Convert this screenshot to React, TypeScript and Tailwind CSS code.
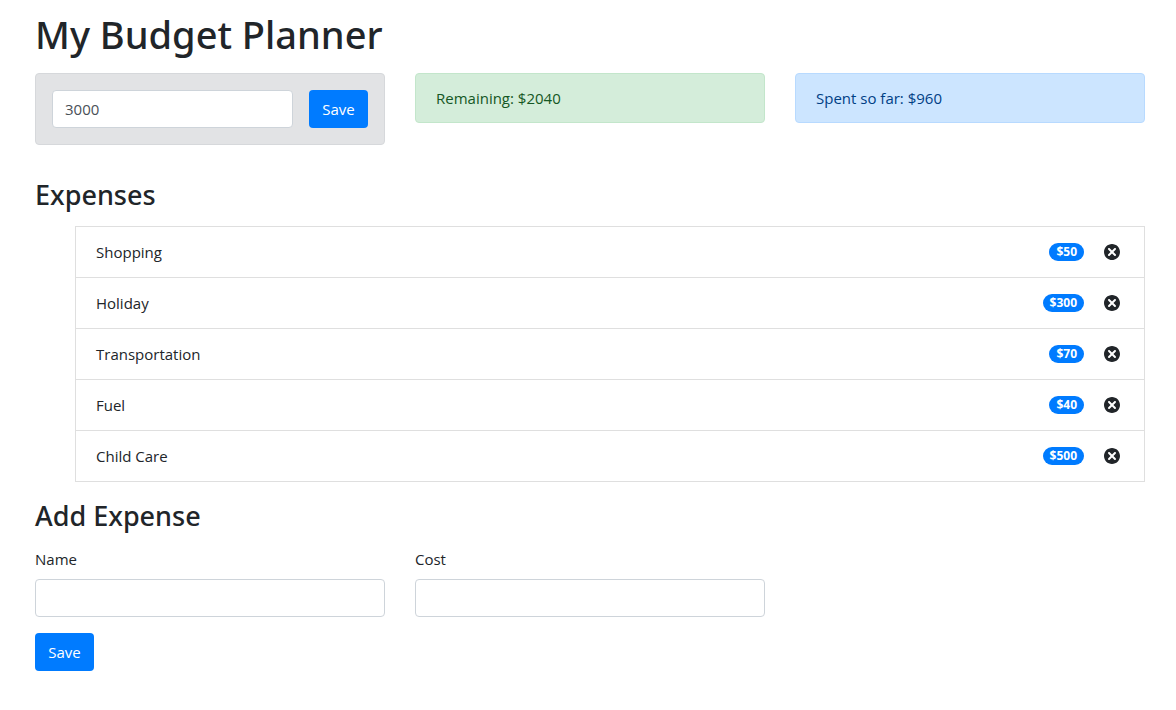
import { useState } from 'react';
import type { FormEvent } from 'react';
import { TiDelete } from 'react-icons/ti';

type Expense = { id: number; name: string; cost: number };

const initialExpenses: Expense[] = [
  { id: 1, name: 'Shopping', cost: 50 },
  { id: 2, name: 'Holiday', cost: 300 },
  { id: 3, name: 'Transportation', cost: 70 },
  { id: 4, name: 'Fuel', cost: 40 },
  { id: 5, name: 'Child Care', cost: 500 },
];

const fieldClass =
  'h-[38px] w-full min-w-0 rounded border border-[#ced4da] bg-white px-3 text-[#495057] outline-none focus:border-[#80bdff]';
const buttonClass =
  'h-[38px] w-[59px] shrink-0 rounded bg-[#007bff] text-white hover:bg-[#0069d9]';
const headingClass = "font-['Noto_Sans',sans-serif] text-[27px] leading-9 font-medium";

export default function App() {
  const [budget, setBudget] = useState(3000);
  const [draft, setDraft] = useState('3000');
  const [expenses, setExpenses] = useState(initialExpenses);
  const [name, setName] = useState('');
  const [cost, setCost] = useState('');
  const spent = expenses.reduce((total, item) => total + item.cost, 0);

  const saveBudget = (event: FormEvent) => {
    event.preventDefault();
    setBudget(Number(draft) || 0);
  };

  const addExpense = (event: FormEvent) => {
    event.preventDefault();
    if (!name) return;
    setExpenses([...expenses, { id: Date.now(), name, cost: Number(cost) || 0 }]);
    setName('');
    setCost('');
  };

  return (
    <main className="min-h-screen bg-white pt-[10px] pr-[31px] pb-10 pl-[35px] font-['Open_Sans',sans-serif] text-[15px] leading-6 text-[#212529]">
      <h1 className="font-['Noto_Sans',sans-serif] text-[38px] leading-[48px] font-medium">
        My Budget Planner
      </h1>

      <section className="mt-[15px] grid grid-cols-3 items-start gap-[30px]">
        <form
          onSubmit={saveBudget}
          className="flex gap-4 rounded border border-[#d6d8db] bg-[#e2e3e5] p-4"
        >
          <input
            aria-label="Budget"
            className={fieldClass}
            value={draft}
            onChange={(event) => setDraft(event.target.value)}
          />
          <button type="submit" className={buttonClass}>
            Save
          </button>
        </form>
        <div className="rounded border border-[#c3e6cb] bg-[#d4edda] px-5 py-3 text-[#155724]">
          Remaining: ${budget - spent}
        </div>
        <div className="rounded border border-[#b8daff] bg-[#cce5ff] px-5 py-3 text-[#004085]">
          Spent so far: ${spent}
        </div>
      </section>

      <h2 className={`${headingClass} mt-8`}>Expenses</h2>
      <ul className="mt-[13px] ml-10 divide-y divide-[#dfdfdf] border border-[#dfdfdf]">
        {expenses.map((item) => (
          <li key={item.id} className="flex h-[51px] items-center justify-between px-5 last:h-[50px]">
            {item.name}
            <div className="flex items-center">
              <span className="mr-4 rounded-full bg-[#007bff] px-[7px] text-xs leading-[18px] font-bold text-white">
                ${item.cost}
              </span>
              <button
                type="button"
                aria-label={`Delete ${item.name}`}
                onClick={() => setExpenses(expenses.filter((other) => other.id !== item.id))}
              >
                <TiDelete size={24} />
              </button>
            </div>
          </li>
        ))}
      </ul>

      <h2 className={`${headingClass} mt-4`}>Add Expense</h2>
      <form onSubmit={addExpense} className="mt-[13px]">
        <div className="grid grid-cols-3 gap-[30px]">
          <div>
            <label htmlFor="name" className="mb-2 block">
              Name
            </label>
            <input
              id="name"
              className={fieldClass}
              value={name}
              onChange={(event) => setName(event.target.value)}
            />
          </div>
          <div>
            <label htmlFor="cost" className="mb-2 block">
              Cost
            </label>
            <input
              id="cost"
              className={fieldClass}
              value={cost}
              onChange={(event) => setCost(event.target.value)}
            />
          </div>
        </div>
        <button type="submit" className={`${buttonClass} mt-4`}>
          Save
        </button>
      </form>
    </main>
  );
}
